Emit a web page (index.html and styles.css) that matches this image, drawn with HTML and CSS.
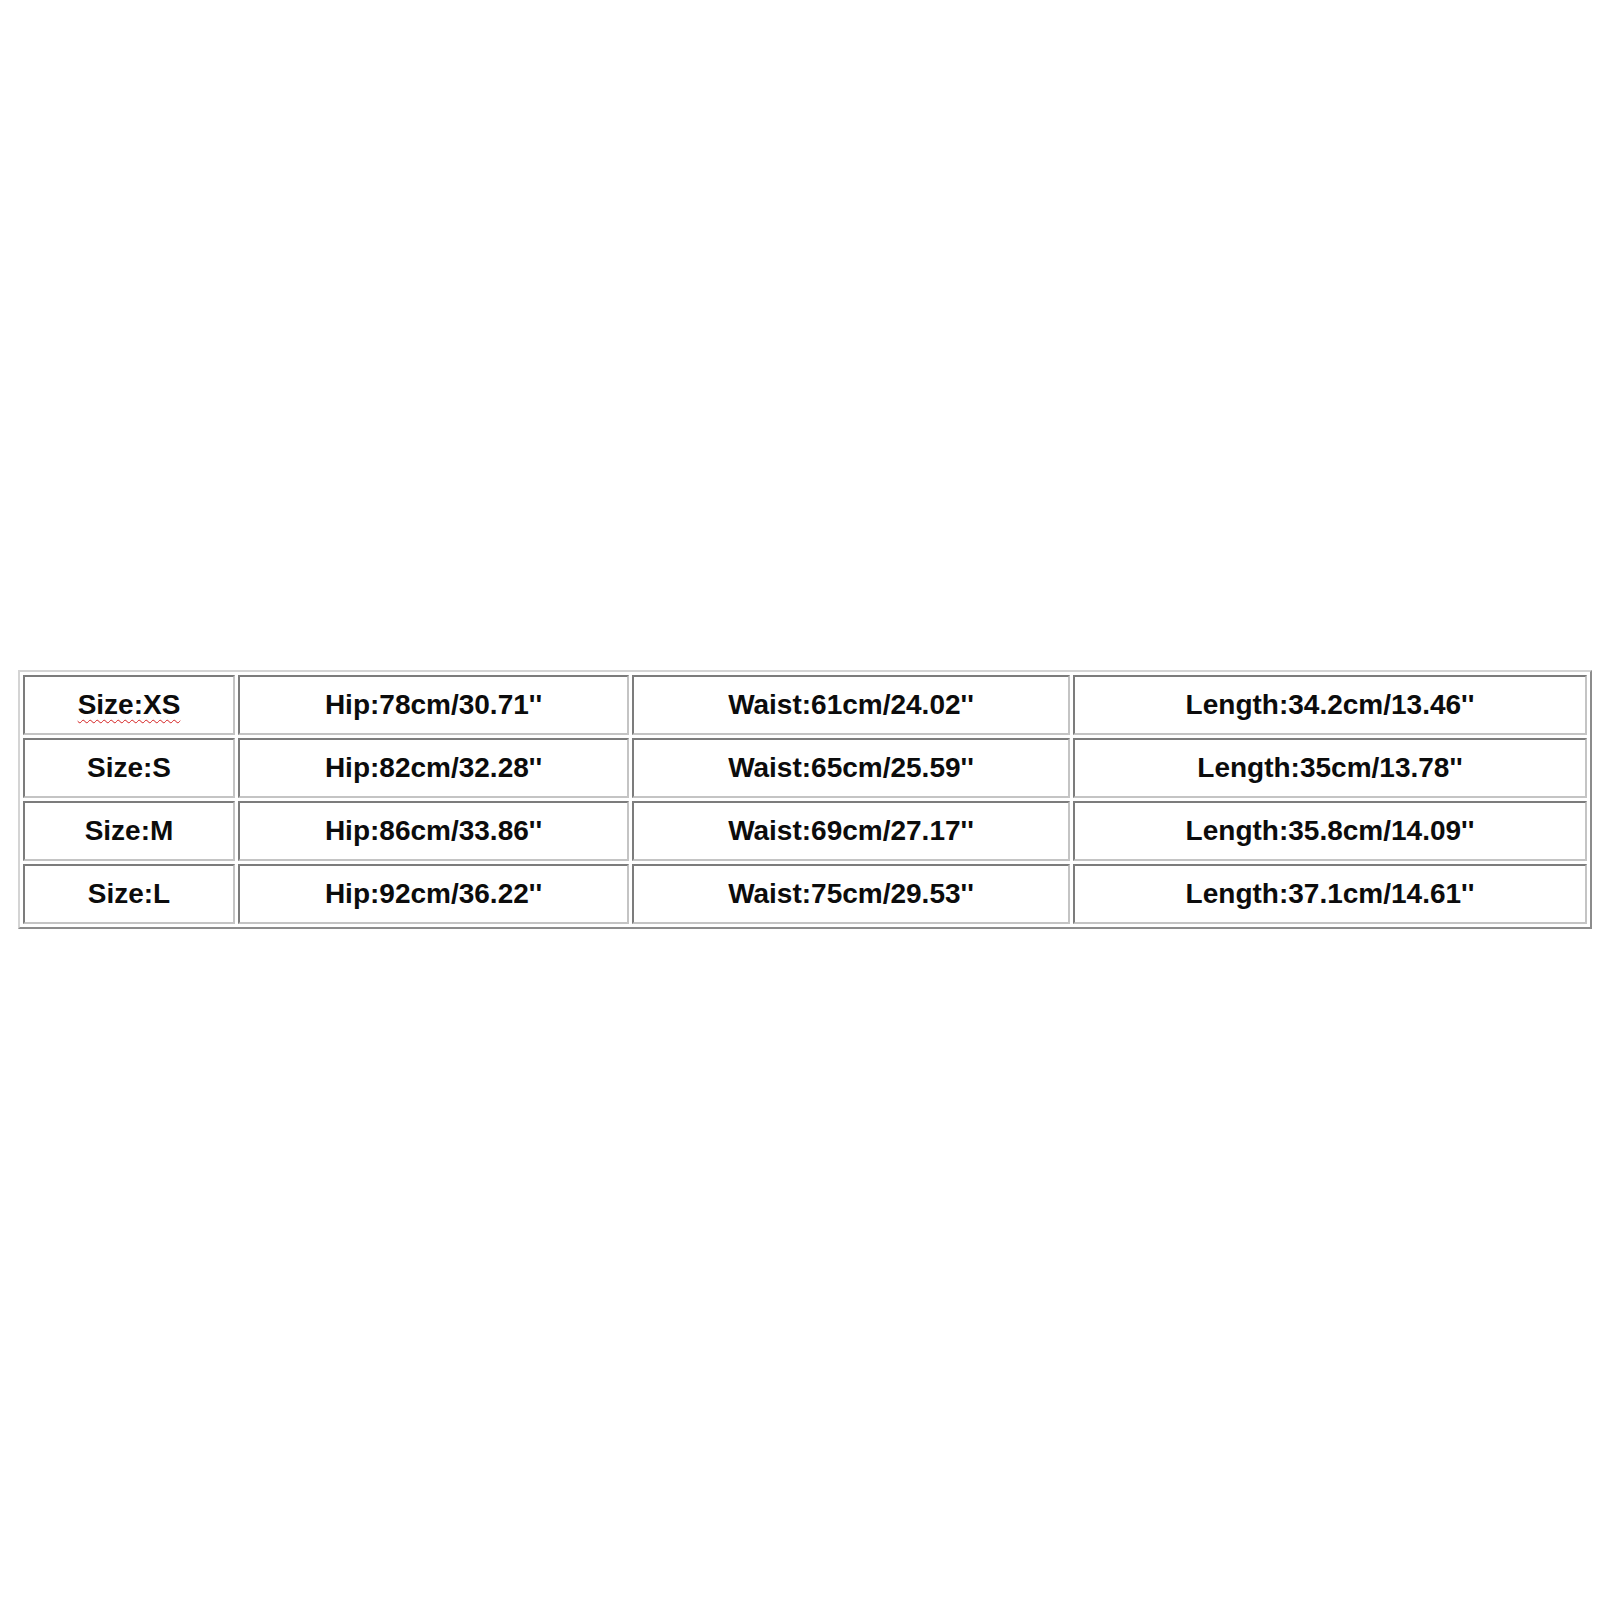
FILE: index.html
```html
<!DOCTYPE html>
<html>
<head>
<meta charset="utf-8">
<link rel="stylesheet" href="styles.css">
</head>
<body>
<table class="sizes">
  <tr>
    <td class="c1"><span class="spell">Size:XS</span></td>
    <td class="c2">Hip:78cm/30.71''</td>
    <td class="c3">Waist:61cm/24.02''</td>
    <td class="c4">Length:34.2cm/13.46''</td>
  </tr>
  <tr>
    <td class="c1">Size:S</td>
    <td class="c2">Hip:82cm/32.28''</td>
    <td class="c3">Waist:65cm/25.59''</td>
    <td class="c4">Length:35cm/13.78''</td>
  </tr>
  <tr>
    <td class="c1">Size:M</td>
    <td class="c2">Hip:86cm/33.86''</td>
    <td class="c3">Waist:69cm/27.17''</td>
    <td class="c4">Length:35.8cm/14.09''</td>
  </tr>
  <tr>
    <td class="c1">Size:L</td>
    <td class="c2">Hip:92cm/36.22''</td>
    <td class="c3">Waist:75cm/29.53''</td>
    <td class="c4">Length:37.1cm/14.61''</td>
  </tr>
</table>
</body>
</html>
```

FILE: styles.css
```css
html, body {
  margin: 0;
  padding: 0;
  background: #ffffff;
}

body {
  padding-top: 670px;
  padding-left: 18px;
  font-family: "Liberation Sans", Arial, sans-serif;
}

.sizes {
  table-layout: fixed;
  width: 1574px;
  border-collapse: separate;
  border-spacing: 3px;
  border-style: solid;
  border-width: 2px;
  border-color: #d4d4d4 #8c8c8c #8c8c8c #d4d4d4;
  box-sizing: border-box;
}

.sizes td {
  box-sizing: border-box;
  height: 60px;
  padding: 0;
  border-style: solid;
  border-width: 2px;
  border-color: #7c7c7c #c4c4c4 #c4c4c4 #7c7c7c;
  text-align: center;
  vertical-align: middle;
  font-size: 28px;
  font-weight: bold;
  color: #0c0c0c;
  line-height: 32px;
  white-space: nowrap;
}

.sizes td.c1 { width: 212px; }
.sizes td.c2 { width: 391px; }
.sizes td.c3 { width: 438px; }
.sizes td.c4 { width: 514px; }

.spell {
  text-decoration: underline wavy #d42020;
  text-decoration-thickness: 1px;
  text-underline-offset: 5px;
}
```
